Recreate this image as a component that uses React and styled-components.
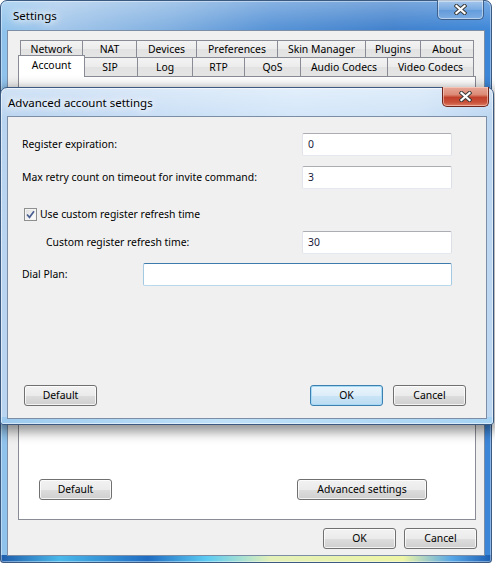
import React from "react";
import styled, { createGlobalStyle, css } from "styled-components";

const GlobalStyle = createGlobalStyle`
  html, body { margin: 0; padding: 0; background: #ffffff; }
  body {
    font-family: "Noto Sans", "Open Sans", sans-serif;
    font-size: 10.4px;
    color: #000;
  }
  #root { width: 495px; height: 564px; }
`;

const Desktop = styled.div`
  position: relative;
  width: 495px;
  height: 564px;
  overflow: hidden;
`;

/* ---------- window chrome ---------- */

const Window = styled.div`
  position: absolute;
  left: ${(p) => p.$left}px;
  top: ${(p) => p.$top}px;
  width: ${(p) => p.$width}px;
  height: ${(p) => p.$height}px;
  box-sizing: border-box;
  display: flex;
  flex-direction: column;
  border: 1px solid #3a5a82;
  border-radius: 7px 7px 3px 3px;
  padding: 0 6px ${(p) => p.$bottom}px 6px;
  ${(p) =>
    p.$active
      ? css`
          background: linear-gradient(90deg, #9ccaee, #bfe1f8 45%, #a6d3f3) bottom / 100% 7px no-repeat,
            linear-gradient(180deg, rgba(255, 255, 255, 0.35), rgba(255, 255, 255, 0) 30px),
            linear-gradient(90deg, #b9d4f0 0%, #c8def5 30%, #d3e6f9 60%, #cfe3f7 85%, #bcd6f1 100%);
          box-shadow: 0 4px 12px 3px rgba(0, 0, 0, 0.42), inset 0 0 0 1px rgba(255, 255, 255, 0.55);
          z-index: 2;
        `
      : css`
          background: linear-gradient(
                90deg,
                #1d5cab 0%,
                #4ab8ea 12%,
                #1f6cc2 30%,
                #5ccbf2 42%,
                #e3f0b8 55%,
                #eef5a6 82%,
                #57a6e6 92%,
                #1c5fb3 100%
              )
              bottom / 100% 7px no-repeat,
            linear-gradient(180deg, rgba(255, 255, 255, 0.3), rgba(255, 255, 255, 0) 30px),
            linear-gradient(90deg, #8fc3ec 0%, #a2c6ea 12%, #7eaee0 35%, #5592d6 55%, #3f80cc 80%, #3c86d8 100%);
          box-shadow: inset 0 0 0 1px rgba(255, 255, 255, 0.4);
        `}
`;

const TitleBar = styled.div`
  display: flex;
  align-items: flex-start;
  height: ${(p) => p.$height}px;
  flex: none;
`;

const TitleText = styled.div`
  padding: ${(p) => p.$pad};
  font-size: 11.5px;
  line-height: 15px;
  color: #000;
  text-shadow: 0 0 6px #fff, 0 0 10px #fff, 0 0 14px rgba(255, 255, 255, 0.9);
`;

const CloseButton = styled.div`
  margin-left: auto;
  margin-top: -1px;
  margin-right: ${(p) => p.$mr}px;
  width: 47px;
  height: ${(p) => p.$h}px;
  box-sizing: border-box;
  display: flex;
  align-items: center;
  justify-content: center;
  border: 1px solid ${(p) => (p.$red ? "#6e261c" : "#3d5f8a")};
  border-top: none;
  border-radius: 0 0 5px 5px;
  ${(p) =>
    p.$red
      ? css`
          background: linear-gradient(180deg, #e8a898 0%, #dc8a76 40%, #c2412b 55%, #c9503a 80%, #de7d62 100%);
          box-shadow: inset 0 0 0 1px rgba(255, 220, 210, 0.55);
        `
      : css`
          background: linear-gradient(180deg, rgba(255, 255, 255, 0.35), rgba(255, 255, 255, 0.12) 50%, rgba(60, 120, 200, 0.1) 51%, rgba(255, 255, 255, 0.25));
          box-shadow: inset 0 0 0 1px rgba(255, 255, 255, 0.45);
        `}
`;

const CloseGlyph = () => (
  <svg width="13" height="11" viewBox="0 0 13 11">
    <path d="M2.5 2 L10.5 9 M10.5 2 L2.5 9" stroke="#3b3b3b" strokeWidth="4.2" strokeLinecap="square" fill="none" />
    <path d="M2.5 2 L10.5 9 M10.5 2 L2.5 9" stroke="#ffffff" strokeWidth="2.3" strokeLinecap="square" fill="none" />
  </svg>
);

const Client = styled.div`
  flex: 1;
  display: flex;
  flex-direction: column;
  background: #f0f0f0;
  border: 1px solid #7b8ea6;
  padding: ${(p) => p.$pad};
  min-height: 0;
`;

/* ---------- push buttons ---------- */

const Button = styled.div`
  width: ${(p) => p.$w || 73}px;
  height: 21px;
  box-sizing: border-box;
  flex: none;
  display: flex;
  align-items: center;
  justify-content: center;
  border: 1px solid ${(p) => (p.$default ? "#3c7fb1" : "#707070")};
  border-radius: 3px;
  line-height: 1;
  padding-bottom: 1px;
  ${(p) =>
    p.$default
      ? css`
          background: linear-gradient(180deg, #eaf5fc 0%, #dcedf9 50%, #c9e4f6 51%, #bcdcf2 100%);
          box-shadow: inset 0 0 0 1px #a6daf5;
        `
      : css`
          background: linear-gradient(180deg, #f2f2f2 0%, #ebebeb 50%, #dddddd 51%, #cfcfcf 100%);
          box-shadow: inset 0 0 0 1px rgba(255, 255, 255, 0.75);
        `}
`;

const ButtonRow = styled.div`
  display: flex;
  align-items: center;
  gap: ${(p) => p.$gap || 0}px;
  justify-content: ${(p) => p.$justify || "flex-end"};
  padding: ${(p) => p.$pad || 0};
  margin-top: ${(p) => p.$mt || "0"};
`;

/* ---------- tab control ---------- */

const TabControl = styled.div`
  flex: 1;
  display: flex;
  flex-direction: column;
  margin-right: 1px;
  min-height: 0;
`;

const TabRow = styled.div`
  display: flex;
  padding-left: 2px;
  height: ${(p) => p.$h}px;
  flex: none;
  position: relative;
  z-index: ${(p) => p.$z || 0};
`;

const Tab = styled.div`
  width: ${(p) => p.$w}px;
  box-sizing: border-box;
  height: 100%;
  flex: none;
  display: flex;
  align-items: center;
  justify-content: center;
  border: 1px solid #898c95;
  border-bottom: none;
  margin-right: -1px;
  padding-bottom: 1px;
  background: linear-gradient(180deg, #f3f3f3 0%, #ececec 50%, #e2e2e2 51%, #e5e5e5 100%);
  white-space: nowrap;
  ${(p) =>
    p.$selected &&
    css`
      position: relative;
      z-index: 2;
      background: #ffffff;
      width: ${p.$w + 4}px;
      height: calc(100% + 3px);
      margin: -2px -3px 0 -2px;
      padding-bottom: 3px;
    `}
`;

const TabPanel = styled.div`
  flex: 1;
  background: #ffffff;
  border: 1px solid #898c95;
  display: flex;
  align-items: flex-end;
  justify-content: space-between;
  padding: 0 48px 19px 20px;
  min-height: 0;
`;

/* ---------- dialog form ---------- */

const Form = styled.div`
  display: flex;
  flex-direction: column;
  padding: 16px 34px 0 14px;
`;

const FieldRow = styled.div`
  display: flex;
  align-items: center;
  height: ${(p) => p.$h || 23}px;
  margin-top: ${(p) => p.$mt || 0}px;
  padding-left: ${(p) => p.$indent || 0}px;
`;

const Label = styled.span`
  white-space: nowrap;
  padding-bottom: 1px;
`;

const TextBox = styled.div`
  margin-left: auto;
  width: ${(p) => p.$w}px;
  height: 23px;
  box-sizing: border-box;
  background: #ffffff;
  border: 1px solid;
  border-color: ${(p) =>
    p.$focused ? "#3d7bad #a4c9e3 #b7d9ed #a4c9e3" : "#abadb3 #dbdfe6 #e3e9ef #e2e3ea"};
  border-radius: 2px;
  display: flex;
  align-items: center;
  padding: 0 0 1px 5px;
  color: #1a1a3a;
`;

const CheckBox = styled.div`
  width: 13px;
  height: 13px;
  box-sizing: border-box;
  flex: none;
  margin-left: 1px;
  border: 1px solid #8e8f8f;
  background: linear-gradient(135deg, #dcdcdc, #f4f4f4 60%, #ffffff);
  box-shadow: inset 0 0 0 1px #f4f4f4;
  display: flex;
  align-items: center;
  justify-content: center;
`;

const CheckLabel = styled.span`
  margin-left: 3px;
  white-space: nowrap;
  padding-bottom: 1px;
`;

const Tick = () => (
  <svg width="11" height="11" viewBox="0 0 11 11">
    <path d="M2 5.5 L4.5 8.3 L9 2.2" stroke="#4a5f92" strokeWidth="1.7" fill="none" />
  </svg>
);

const rowOne = [
  ["Network", 63],
  ["NAT", 55],
  ["Devices", 61],
  ["Preferences", 82],
  ["Skin Manager", 89],
  ["Plugins", 56],
  ["About", 54],
];

const rowTwo = [
  ["Account", 63, true],
  ["SIP", 56],
  ["Log", 56],
  ["RTP", 53],
  ["QoS", 57],
  ["Audio Codecs", 88],
  ["Video Codecs", 87],
];

export default function App() {
  return (
    <Desktop>
      <GlobalStyle />

      <Window $left={0} $top={0} $width={492} $height={563} $bottom={6}>
        <TitleBar $height={29}>
          <TitleText $pad="7px 0 0 6px">Settings</TitleText>
          <CloseButton $mr={1} $h={20}>
            <CloseGlyph />
          </CloseButton>
        </TitleBar>
        <Client $pad="9px 7px 6px 10px">
          <TabControl>
            <TabRow $h={17}>
              {rowOne.map(([name, w]) => (
                <Tab key={name} $w={w}>
                  {name}
                </Tab>
              ))}
            </TabRow>
            <TabRow $h={19} $z={1}>
              {rowTwo.map(([name, w, sel]) => (
                <Tab key={name} $w={w} $selected={sel}>
                  {name}
                </Tab>
              ))}
            </TabRow>
            <TabPanel>
              <Button>Default</Button>
              <Button $w={130}>Advanced settings</Button>
            </TabPanel>
          </TabControl>
          <ButtonRow $gap={8} $mt="8px">
            <Button>OK</Button>
            <Button>Cancel</Button>
          </ButtonRow>
        </Client>
      </Window>

      <Window $left={0} $top={87} $width={494} $height={338} $bottom={5} $active>
        <TitleBar $height={28}>
          <TitleText $pad="7px 0 0 1px">Advanced account settings</TitleText>
          <CloseButton $mr={-2} $h={20} $red>
            <CloseGlyph />
          </CloseButton>
        </TitleBar>
        <Client $pad="0">
          <Form>
            <FieldRow>
              <Label>Register expiration:</Label>
              <TextBox $w={150}>0</TextBox>
            </FieldRow>
            <FieldRow $mt={10}>
              <Label>Max retry count on timeout for invite command:</Label>
              <TextBox $w={150}>3</TextBox>
            </FieldRow>
            <FieldRow $mt={13} $h={24} $indent={1}>
              <CheckBox>
                <Tick />
              </CheckBox>
              <CheckLabel>Use custom register refresh time</CheckLabel>
            </FieldRow>
            <FieldRow $mt={5} $indent={24}>
              <Label>Custom register refresh time:</Label>
              <TextBox $w={150}>30</TextBox>
            </FieldRow>
            <FieldRow $mt={9}>
              <Label>Dial Plan:</Label>
              <TextBox $w={309} $focused />
            </FieldRow>
          </Form>
          <ButtonRow $mt="auto" $justify="space-between" $pad="0 20px 12px 16px">
            <Button>Default</Button>
            <ButtonRow $gap={10}>
              <Button $default>OK</Button>
              <Button>Cancel</Button>
            </ButtonRow>
          </ButtonRow>
        </Client>
      </Window>
    </Desktop>
  );
}
